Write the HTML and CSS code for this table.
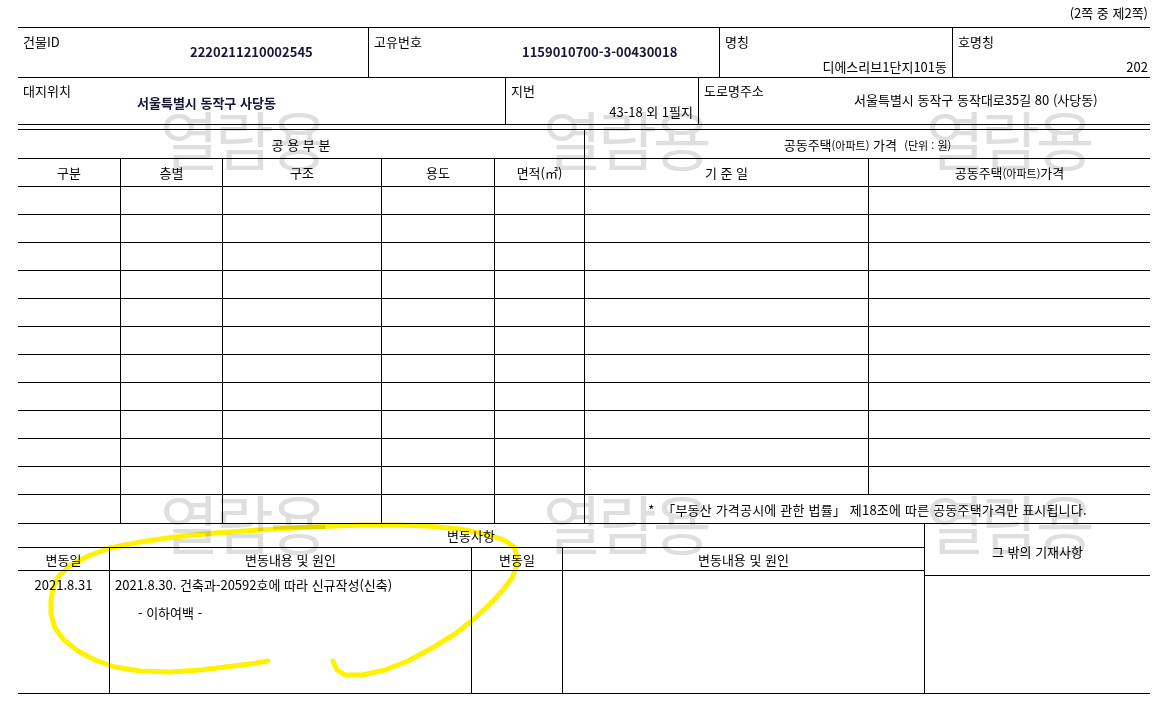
FILE: index.html
```html
<!DOCTYPE html>
<html lang="ko">
<head>
    <meta charset="UTF-8">
    <meta name="viewport" content="width=device-width, initial-scale=1.0">
    <title>공동주택가격 열람</title>
    <link rel="stylesheet" href="styles.css">
</head>
<body>
    <div class="page">
        <div class="marks">
            <span class="mark m1">열람용</span>
            <span class="mark m2">열람용</span>
            <span class="mark m3">열람용</span>
            <span class="mark m4">열람용</span>
            <span class="mark m5">열람용</span>
            <span class="mark m6">열람용</span>
        </div>

        <div class="sheet">
            <div class="pager">(2쪽 중 제2쪽)</div>

            <div class="info">
                <div class="info-row row-a">
                    <div class="info-cell">
                        <span class="label">건물ID</span>
                        <span class="value strong v-id">2220211210002545</span>
                    </div>
                    <div class="info-cell">
                        <span class="label">고유번호</span>
                        <span class="value strong v-uid">1159010700-3-00430018</span>
                    </div>
                    <div class="info-cell">
                        <span class="label">명칭</span>
                        <span class="value v-name">디에스리브1단지101동</span>
                    </div>
                    <div class="info-cell">
                        <span class="label">호명칭</span>
                        <span class="value v-ho">202</span>
                    </div>
                </div>
                <div class="info-row row-b">
                    <div class="info-cell">
                        <span class="label">대지위치</span>
                        <span class="value strong v-site">서울특별시 동작구 사당동</span>
                    </div>
                    <div class="info-cell">
                        <span class="label">지번</span>
                        <span class="value v-lot">43-18 외 1필지</span>
                    </div>
                    <div class="info-cell">
                        <span class="label">도로명주소</span>
                        <span class="value v-road">서울특별시 동작구 동작대로35길 80 (사당동)</span>
                    </div>
                </div>
            </div>

            <div class="price" id="priceGrid">
                <div class="first span5">공 용 부 분</div>
                <div class="span2"><span>공동주택<small>(아파트)</small> 가격 &nbsp;<small>(단위 : 원)</small></span></div>

                <div class="first">구분</div>
                <div>층별</div>
                <div>구조</div>
                <div>용도</div>
                <div>면적(㎡)</div>
                <div>기 준 일</div>
                <div><span>공동주택<small>(아파트)</small>가격</span></div>

                <div class="first" id="noteRow"></div>
                <div></div>
                <div></div>
                <div></div>
                <div></div>
                <div class="span2 note">*&nbsp; 「부동산 가격공시에 관한 법률」 제18조에 따른 공동주택가격만 표시됩니다.</div>
            </div>

            <div class="changes">
                <div class="change-log">
                    <div class="log-title">변동사항</div>
                    <div class="log-head first">변동일</div>
                    <div class="log-head">변동내용 및 원인</div>
                    <div class="log-head">변동일</div>
                    <div class="log-head">변동내용 및 원인</div>
                    <div class="log-body first log-date">2021.8.31</div>
                    <div class="log-body log-text">
                        <p>2021.8.30. 건축과-20592호에 따라 신규작성(신축)</p>
                        <p class="blank">- 이하여백 -</p>
                    </div>
                    <div class="log-body"></div>
                    <div class="log-body"></div>
                </div>
                <div class="other">
                    <div class="other-head">그 밖의 기재사항</div>
                    <div class="other-body"></div>
                </div>
            </div>
        </div>

        <svg class="scribble" width="1165" height="710" viewBox="0 0 1165 710">
            <path d="M268 661 L250 664 L225 667 L200 670 L170 672 L140 671 L115 667 L95 660 L78 651 L64 640 L55 628 L51 614 L51 600 L53 588 L59 576 L70 566 L88 556 L110 548 L140 542 L175 537 L215 533 L260 530 L310 527 L360 525 L400 525 L427 526 L460 529 L490 535 L506 541 L515 548 L517 558 L516 568 L512 578 L503 590 L490 604 L474 619 L455 634 L432 648 L408 661 L385 670 L362 675 L345 675 L337 670 L333 661"/>
        </svg>
    </div>

    <script>
        // 빈 가격 행 11줄 만들기
        const priceGrid = document.getElementById("priceGrid");
        const noteRow = document.getElementById("noteRow");

        for (let r = 0; r < 11; r++) {
            for (let c = 0; c < 7; c++) {
                const cell = document.createElement("div");
                if (c === 0) cell.className = "first";
                priceGrid.insertBefore(cell, noteRow);
            }
        }
    </script>
</body>
</html>
```

FILE: styles.css
```css
* {
    box-sizing: border-box;
}
body {
    margin: 0;
    background-color: #fff;
    font-family: "Noto Sans CJK KR", "Noto Sans", sans-serif;
    font-size: 13px;
    color: #000;
}
p {
    margin: 0;
}
.page {
    position: relative;
    width: 1165px;
    height: 710px;
    overflow: hidden;
}

/* 열람용 워터마크 */
.marks {
    position: absolute;
    inset: 0;
    z-index: 0;
}
.mark {
    position: absolute;
    font-size: 64px;
    font-weight: 400;
    line-height: 64px;
    letter-spacing: -4px;
    color: #dfdfdf;
    white-space: nowrap;
}
.m1 { left: 160px; top: 105px; }
.m2 { left: 543px; top: 105px; }
.m3 { left: 926px; top: 105px; }
.m4 { left: 160px; top: 489px; }
.m5 { left: 543px; top: 489px; }
.m6 { left: 926px; top: 489px; }

.sheet {
    position: relative;
    z-index: 1;
    margin-left: 18px;
    width: 1132px;
}
.pager {
    height: 27px;
    line-height: 26px;
    text-align: right;
    padding-right: 2px;
}

/* 건물 정보 */
.info {
    border-top: 1px solid #000;
}
.info-row {
    display: grid;
    border-bottom: 1px solid #000;
}
.row-a {
    grid-template-columns: 350px 351px 233px 198px;
    height: 50px;
}
.row-b {
    grid-template-columns: 487px 193px 452px;
    height: 47px;
}
.info-cell {
    border-left: 1px solid #000;
    padding: 6px 5px 0;
    line-height: 16px;
    white-space: nowrap;
}
.info-cell:first-child {
    border-left: none;
}
.row-b .info-cell {
    padding-top: 5px;
}
.label,
.value {
    display: block;
}
.value.strong {
    font-weight: 700;
    color: #161636;
}
.v-id { margin-top: -6px; padding-left: 167px; }
.v-uid { margin-top: -6px; padding-left: 148px; }
.v-name { margin-top: 9px; text-align: right; }
.v-ho { margin-top: 9px; text-align: right; margin-right: -3px; }
.v-site { margin-top: -4px; padding-left: 114px; }
.v-lot { margin-top: 5px; text-align: right; }
.v-road { margin-top: -7px; padding-left: 150px; }

/* 공동주택 가격 */
.price {
    margin-top: 4px;
    border-top: 1px solid #000;
    display: grid;
    grid-template-columns: 102px 102px 159px 113px 90px 284px 282px;
    grid-template-rows: 29px 28px repeat(11, 28px) 29px;
}
.price > div {
    border-left: 1px solid #000;
    border-bottom: 1px solid #000;
    display: flex;
    align-items: center;
    justify-content: center;
    white-space: nowrap;
}
.price > div.first {
    border-left: none;
}
.price small {
    font-size: 11px;
}
.price .note {
    letter-spacing: 0.2px;
}
.span5 {
    grid-column: span 5;
}
.span2 {
    grid-column: span 2;
}

/* 변동사항 */
.changes {
    display: grid;
    grid-template-columns: 906px 226px;
}
.change-log {
    display: grid;
    grid-template-columns: 91px 362px 91px 362px;
    grid-template-rows: 24px 23px 123px;
}
.change-log > div {
    border-left: 1px solid #000;
    border-bottom: 1px solid #000;
}
.change-log > div.first {
    border-left: none;
}
.log-title {
    grid-column: span 4;
    border-left: none !important;
    display: flex;
    align-items: center;
    justify-content: center;
}
.log-head {
    display: flex;
    align-items: center;
    justify-content: center;
}
.log-body {
    line-height: 28px;
    white-space: nowrap;
}
.log-date {
    text-align: center;
}
.log-text {
    padding-left: 5px;
}
.log-text .blank {
    padding-left: 23px;
}
.other {
    border-left: 1px solid #000;
    display: grid;
    grid-template-rows: 52px 118px;
}
.other > div {
    border-bottom: 1px solid #000;
}
.other-head {
    display: flex;
    align-items: center;
    justify-content: center;
    padding-top: 4px;
}

/* 노란 형광펜 표시 */
.scribble {
    position: absolute;
    left: 0;
    top: 0;
    z-index: 2;
    pointer-events: none;
    mix-blend-mode: multiply;
}
.scribble path {
    fill: none;
    stroke: #fff200;
    stroke-width: 5;
    stroke-linecap: round;
    stroke-linejoin: round;
}
```
